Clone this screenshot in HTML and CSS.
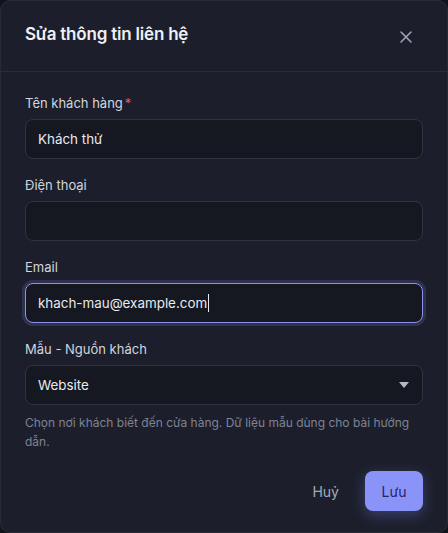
FILE: index.html
```html
<!DOCTYPE html>
<html lang="vi">
<head>
<meta charset="utf-8">
<link rel="stylesheet" href="styles.css">
</head>
<body>
<div class="modal">
  <div class="header">
    <h2 class="title">Sửa thông tin liên hệ</h2>
    <button class="close" aria-label="Đóng">
      <svg width="14" height="14" viewBox="0 0 14 14"><path d="M2 2L12 12M12 2L2 12" stroke="#a3a8b8" stroke-width="1.5" stroke-linecap="round"/></svg>
    </button>
  </div>
  <div class="body">
    <div class="field">
      <label class="label">Tên khách hàng<span class="req">*</span></label>
      <div class="input">Khách thử</div>
    </div>
    <div class="field">
      <label class="label">Điện thoại</label>
      <div class="input"></div>
    </div>
    <div class="field">
      <label class="label">Email</label>
      <div class="input focus">khach-mau@example.com<span class="caret"></span></div>
    </div>
    <div class="field">
      <label class="label">Mẫu - Nguồn khách</label>
      <div class="input select">
        <span>Website</span>
        <svg width="10" height="6" viewBox="0 0 10 6"><path d="M0 0H10L5 6Z" fill="#b4b8c6"/></svg>
      </div>
      <p class="help">Chọn nơi khách biết đến cửa hàng. Dữ liệu mẫu dùng cho bài hướng dẫn.</p>
    </div>
  </div>
  <div class="footer">
    <button class="btn ghost">Huỷ</button>
    <button class="btn primary">Lưu</button>
  </div>
</div>
</body>
</html>
```
FILE: styles.css
```css
* { box-sizing: border-box; }
html, body { margin: 0; padding: 0; }
body {
  background: #12141b;
  font-family: Inter, "Noto Sans", sans-serif;
  width: 448px;
  height: 533px;
  overflow: hidden;
}
.modal {
  width: 448px;
  height: 533px;
  background: #1c1f2b;
  border: 1px solid #272b38;
  border-radius: 10px;
  display: flex;
  flex-direction: column;
}
.header {
  height: 71px;
  border-bottom: 1px solid #2a2e3b;
  display: flex;
  align-items: center;
  justify-content: space-between;
  padding: 0 24px 4px 24px;
}
.title {
  margin: 0;
  font-size: 17px;
  font-weight: 600;
  color: #eef0f5;
  letter-spacing: -0.2px;
}
.close {
  background: none;
  border: 0;
  padding: 0;
  width: 24px;
  height: 24px;
  display: flex;
  align-items: center;
  justify-content: center;
  margin-right: 5px;
  margin-top: 6px;
}
.body {
  padding: 21px 24px 0 24px;
  display: flex;
  flex-direction: column;
  gap: 16px;
}
.field { display: flex; flex-direction: column; gap: 6px; }
.label {
  font-size: 13px;
  line-height: 20px;
  color: #d2d5de;
}
.req { color: #d85a6a; margin-left: 2px; }
.input {
  height: 40px;
  border: 1px solid #2f3342;
  border-radius: 8px;
  background: #151821;
  color: #e8eaf0;
  font-size: 13.4px;
  padding: 0 12px;
  display: flex;
  align-items: center;
}
.input.focus {
  border-color: #8b93e6;
  box-shadow: 0 0 0 3px rgba(110, 120, 220, 0.22);
}
.caret {
  display: inline-block;
  width: 1px;
  height: 18px;
  background: #e8eaf0;
  margin-left: 1px;
}
.select { justify-content: space-between; padding-right: 13px; }
.help {
  margin: 2px 0 0 0;
  font-size: 12px;
  line-height: 19px;
  color: #7e8394;
}
.footer {
  margin-top: auto;
  padding: 0 24px 21px 24px;
  display: flex;
  justify-content: flex-end;
  align-items: center;
  gap: 8px;
}
.btn {
  font-family: Inter, "Noto Sans", sans-serif;
  font-size: 14px;
  border: 0;
  border-radius: 8px;
  height: 40px;
}
.ghost {
  background: none;
  color: #a5a9b8;
  padding: 0 18px;
}
.primary {
  width: 58px;
  background: #8a93f7;
  color: #1f2566;
  box-shadow: 0 4px 14px rgba(120, 130, 240, 0.35);
}
```
